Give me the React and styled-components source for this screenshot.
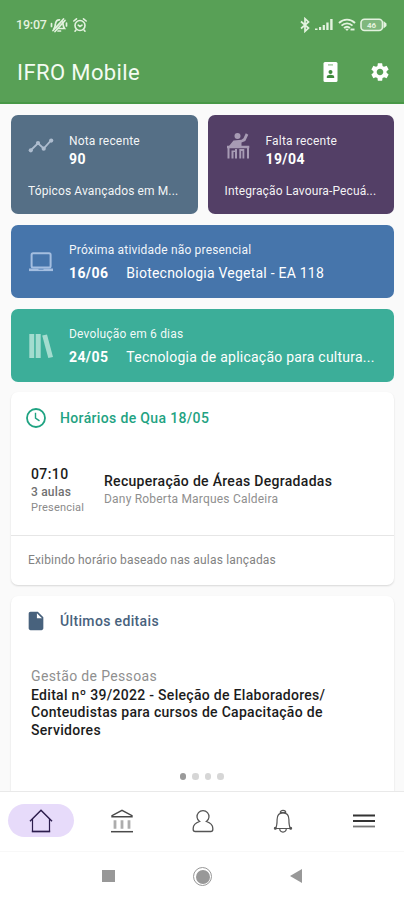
import styled, { createGlobalStyle } from 'styled-components'
import { MdSettings, MdInsertDriveFile } from 'react-icons/md'



const App = () => {

    return (

        <Screen>
            <GlobalStyle />
            <Header>
                <StatusBar>
                    <StatusSide $gap="4px">
                        <Clock>19:07</Clock>
                        <MutedIcon />
                        <AlarmIcon />
                    </StatusSide>
                    <StatusSide $gap="4px">
                        <BluetoothIcon />
                        <SignalIcon />
                        <WifiIcon />
                        <BatteryIcon />
                    </StatusSide>
                </StatusBar>
                <Toolbar>
                    <AppTitle>IFRO Mobile</AppTitle>
                    <ToolbarActions>
                        <BadgeIcon />
                        <MdSettings size={22} />
                    </ToolbarActions>
                </Toolbar>
            </Header>

            <Feed>
                <TileRow>
                    <Tile $color="#556f86">
                        <TileTop>
                            <TileIcon $color="#aebdcf"><TrendIcon /></TileIcon>
                            <TileTexts>
                                <TileCaption>Nota recente</TileCaption>
                                <TileValue>90</TileValue>
                            </TileTexts>
                        </TileTop>
                        <TileSubject>Tópicos Avançados em M...</TileSubject>
                    </Tile>
                    <Tile $color="#533f66">
                        <TileTop>
                            <TileIcon $color="#a79bb4"><StudentIcon /></TileIcon>
                            <TileTexts>
                                <TileCaption>Falta recente</TileCaption>
                                <TileValue>19/04</TileValue>
                            </TileTexts>
                        </TileTop>
                        <TileSubject>Integração Lavoura-Pecuá...</TileSubject>
                    </Tile>
                </TileRow>

                <Banner $color="#4675ab">
                    <TileIcon $color="#a4bee0"><LaptopIcon /></TileIcon>
                    <TileTexts>
                        <TileCaption>Próxima atividade não presencial</TileCaption>
                        <BannerLine>
                            <TileValue>16/06</TileValue>
                            <BannerTitle>Biotecnologia Vegetal - EA 118</BannerTitle>
                        </BannerLine>
                    </TileTexts>
                </Banner>

                <Banner $color="#3cae99">
                    <TileIcon $color="#a3dccf"><BooksIcon /></TileIcon>
                    <TileTexts>
                        <TileCaption>Devolução em 6 dias</TileCaption>
                        <BannerLine>
                            <TileValue>24/05</TileValue>
                            <BannerTitle>Tecnologia de aplicação para cultura...</BannerTitle>
                        </BannerLine>
                    </TileTexts>
                </Banner>

                <Schedule>
                    <CardHeading $color="#1fa382" $height="52px">
                        <ClockIcon />
                        <CardTitle>Horários de Qua 18/05</CardTitle>
                    </CardHeading>
                    <Lesson>
                        <LessonTime>
                            <Hour>07:10</Hour>
                            <LessonCount>3 aulas</LessonCount>
                            <LessonMode>Presencial</LessonMode>
                        </LessonTime>
                        <LessonInfo>
                            <LessonName>Recuperação de Áreas Degradadas</LessonName>
                            <Teacher>Dany Roberta Marques Caldeira</Teacher>
                        </LessonInfo>
                    </Lesson>
                    <CardFooter>Exibindo horário baseado nas aulas lançadas</CardFooter>
                </Schedule>

                <Notices>
                    <CardHeading $color="#48627d" $height="49px">
                        <MdInsertDriveFile size={22} />
                        <CardTitle>Últimos editais</CardTitle>
                    </CardHeading>
                    <Notice>
                        <NoticeArea>Gestão de Pessoas</NoticeArea>
                        <NoticeTitle>
                            Edital nº 39/2022 - Seleção de Elaboradores/<br />
                            Conteudistas para cursos de Capacitação de<br />
                            Servidores
                        </NoticeTitle>
                    </Notice>
                    <Dots>
                        <Dot $active />
                        <Dot />
                        <Dot />
                        <Dot />
                    </Dots>
                </Notices>
            </Feed>

            <TabBar>
                <Tab $active><HomeIcon /></Tab>
                <Tab><InstitutionIcon /></Tab>
                <Tab><PersonIcon /></Tab>
                <Tab><BellIcon /></Tab>
                <Tab><MenuIcon /></Tab>
            </TabBar>

            <SystemBar>
                <RecentsKey />
                <HomeKey />
                <BackKey />
            </SystemBar>
        </Screen>

    )
}

/* status bar icons */

const MutedIcon = () => (
    <svg width="18" height="16" viewBox="0 0 18 16" fill="none" stroke="currentColor" strokeWidth="1.7" strokeLinecap="round">
        <path d="M4 11.5c1.300-1 1-3 1.500-5C6 4 7.600 2.700 9.500 2.800M12.500 5c.8 2 .3 4 2 6.500H7.500M8 14h2.500" />
        <path d="M3 13.500 13.500 2M1.500 6.500v3M16.500 6v3M6 10.500l5-5.500M5 14.500 15 3.500" />
    </svg>
)

const AlarmIcon = () => (
    <svg width="16" height="16" viewBox="0 0 16 16" fill="none" stroke="currentColor" strokeWidth="1.600" strokeLinecap="round">
        <circle cx="8" cy="8.500" r="5" />
        <path d="M1.800 4 4.500 1.800M14.200 4 11.500 1.800M6.200 8.200 8 9.500l2-1.300M4 13l-1 1.200M12 13l1 1.200" />
    </svg>
)

const BluetoothIcon = () => (
    <svg width="10" height="16" viewBox="0 0 10 16" fill="none" stroke="currentColor" strokeWidth="1.700">
        <path d="M1 4.500 8.500 11 5 14.300V1.700L8.500 5 1 11.500" />
    </svg>
)

const SignalIcon = () => (
    <svg width="20" height="13" viewBox="0 0 20 13" fill="currentColor">
        <path d="M1 10.500h2.500V12H1zM5 9h2.200v3H5zM8.700 7h2.200v5H8.700zM12.300 4.500h2.300V12h-2.300zM16.200 1h2.400v11h-2.400z" />
    </svg>
)

const WifiIcon = () => (
    <svg width="18" height="14" viewBox="0 0 18 14" fill="none" stroke="currentColor" strokeWidth="1.900">
        <path d="M1 5c4.500-4.500 11.500-4.500 16 0M3.500 7.600c3.200-3 7.800-3 11 0M6 10c2-1.700 4-1.700 6 0" />
        <path d="M7 10.800 9 13l2-2.200z" fill="currentColor" stroke="none" />
        <path d="M12.500 11.500h4" />
    </svg>
)

const BatteryIcon = () => (
    <svg width="27" height="14" viewBox="0 0 27 14">
        <rect x="1" y="1.200" width="21.500" height="11.300" rx="3.500" fill="#7fb77d" stroke="currentColor" strokeWidth="1.600" />
        <path d="M23.500 3v7.500l3-2.500V5.500z" fill="currentColor" />
        <text x="7" y="9.800" fontSize="8" fontWeight="700" fill="currentColor" fontFamily="Roboto, sans-serif">46</text>
    </svg>
)

const BadgeIcon = () => (
    <svg width="15" height="20" viewBox="0 0 15 20">
        <rect x="0.500" y="0" width="14" height="20" rx="1.500" fill="currentColor" />
        <path d="M5 2.300h5v1.200H5z" fill="#8dbf8b" />
        <circle cx="7.500" cy="10" r="2" fill="#3f8a3d" />
        <path d="M3.800 16v-1.300c0-1.200 2-1.900 3.700-1.900s3.700.7 3.700 1.900V16z" fill="#3f8a3d" />
    </svg>
)

/* tile icons */

const TrendIcon = () => (
    <svg width="26" height="16" viewBox="0 0 26 16" fill="currentColor">
        <path d="M2.500 12.500 10 5.300l5.700 5.200 7.800-8.700" fill="none" stroke="currentColor" strokeWidth="1.800" />
        <circle cx="2.800" cy="12.300" r="2.100" />
        <circle cx="10" cy="5" r="2.100" />
        <circle cx="15.700" cy="10.700" r="2.100" />
        <circle cx="23.200" cy="2.600" r="2.100" />
    </svg>
)

const StudentIcon = () => (
    <svg width="24" height="28" viewBox="0 0 24 28" fill="currentColor">
        <circle cx="11.500" cy="4" r="3" />
        <path d="M19.800 1.200 22.300 2.700 19.300 9 15.500 10.500V14H3l4.500-5.500 8-.8 2-1.500z" />
        <path d="M1 13.800h22.300v2.500H1zM1.500 16h2v10.500h-2zM21 16h2v10.500h-2zM5.500 18.500h4.500v1.500H7.500v6.500h-2zM9 17h2v9.500H9zM13.300 17h5v9.500h-1.800v-7.500h-1.300v7.500h-1.900z" />
    </svg>
)

const LaptopIcon = () => (
    <svg width="26" height="20" viewBox="0 0 26 20" fill="none" stroke="currentColor">
        <rect x="3.600" y="1.200" width="19" height="14.300" rx="1.500" strokeWidth="2" />
        <path d="M1 17.800h24" strokeWidth="2.600" />
        <path d="M10.500 17.300h5" stroke="#6f96c6" strokeWidth="1.200" />
    </svg>
)

const BooksIcon = () => (
    <svg width="26" height="26" viewBox="0 0 26 26" fill="currentColor">
        <path d="M1.300 1h4.900v24H1.300zM7.700 1h5v24h-5z" />
        <path d="m14.200 2.500 4.800-1L25 24l-4.700 1z" />
    </svg>
)

const ClockIcon = () => (
    <svg width="22" height="22" viewBox="0 0 22 22" fill="none" stroke="currentColor" strokeWidth="1.800">
        <circle cx="11" cy="11" r="9" />
        <path d="M10.500 5.800v5.400l4 2.700" strokeWidth="1.400" />
    </svg>
)

/* bottom bar icons */

const HomeIcon = () => (
    <svg width="26" height="26" viewBox="0 0 26 26" fill="none" stroke="#2c1d4d">
        <path d="M2 13.200 13 2.300l11 10.900" strokeWidth="1.500" />
        <path d="M4.500 11v12.500M21.500 11v12.500" strokeWidth="1.200" />
        <path d="M3.800 23.500h18.400" strokeWidth="1.700" />
    </svg>
)

const InstitutionIcon = () => (
    <svg width="26" height="26" viewBox="0 0 26 26" fill="none" stroke="#4a4a4a">
        <path d="M3 8.700v-1L13 2.300l10 5.400v1z" strokeWidth="1.400" />
        <path d="M6 12.300v8.500M13 12.300v8.500M20 12.300v8.500" stroke="#adadad" strokeWidth="2.800" />
        <path d="M2 23.700h22" strokeWidth="1.500" />
    </svg>
)

const PersonIcon = () => (
    <svg width="24" height="26" viewBox="0 0 24 26" fill="none" stroke="#555" strokeWidth="1.300">
        <path d="M8.600 13.500a6 6 0 1 1 6.800 0c3.600 1.200 6.400 3 6.400 6.700v1.300c0 1.400-.8 2-2 2H4.200c-1.200 0-2-.6-2-2v-1.300c0-3.700 2.800-5.500 6.400-6.700z" />
    </svg>
)

const BellIcon = () => (
    <svg width="20" height="26" viewBox="0 0 20 26" fill="none" stroke="#555" strokeWidth="1.200">
        <path d="M7.200 4.800C7.200 1.500 12.800 1.500 12.800 4.800M7 4.600h6" />
        <path d="M2.500 20.500c1.600-2.500 1.600-5.500 1.600-9C4.100 7.300 6.300 4.800 10 4.800s5.900 2.500 5.900 6.700c0 3.500 0 6.500 1.600 9z" />
        <path d="M6.700 20.800c.3 4.300 6.300 4.300 6.600 0" />
        <circle cx="2.300" cy="20.300" r=".9" fill="#444" />
        <circle cx="17.700" cy="20.300" r=".9" fill="#444" />
    </svg>
)

const MenuIcon = () => (
    <svg width="24" height="16" viewBox="0 0 24 16" stroke="#333" strokeWidth="1.800">
        <path d="M1 2.500h22M1 8h22" />
        <path d="M1 13.500h22" stroke="#777" />
    </svg>
)

const GlobalStyle = createGlobalStyle `
    body {
        margin: 0;
        background: #fafafa;
        font-family: Roboto, "Noto Sans", sans-serif;
    }

    *, *::before, *::after {
        box-sizing: border-box;
    }

    svg {
        display: block;
        flex-shrink: 0;
    }
`

const Screen = styled.div `
    display: flex;
    flex-direction: column;
    width: 404px;
    height: 900px;
    overflow: hidden;
    background-color: #fafafa;
`

const Header = styled.header `
    flex: 0 0 104px;
    color: white;
    background-color: #58a056;
    border-bottom: 2px solid #489847;
`

const StatusBar = styled.div `
    display: flex;
    align-items: center;
    justify-content: space-between;
    height: 49px;
    padding: 0 17px 0 16px;
    color: #e3f2df;
`

const StatusSide = styled.div `
    display: flex;
    align-items: center;
    gap: ${props => props.$gap};
`

const Clock = styled.span `
    margin-right: -1px;
    font-size: 12.5px;
    line-height: 16px;
    font-weight: 500;
    letter-spacing: -0.2px;
`

const Toolbar = styled.div `
    display: flex;
    align-items: center;
    justify-content: space-between;
    height: 46px;
    padding: 0 13px 0 17px;
`

const AppTitle = styled.h1 `
    margin: 0;
    padding-top: 2px;
    font-size: 22px;
    line-height: 28px;
    font-weight: 400;
    letter-spacing: 0.4px;
    color: #f4fbf2;
`

const ToolbarActions = styled.div `
    display: flex;
    align-items: center;
    gap: 31px;
`

const Feed = styled.main `
    display: flex;
    flex-direction: column;
    flex: 0 0 687px;
    gap: 11px;
    padding: 11px 10px 0 11px;
    overflow: hidden;
`

const TileRow = styled.div `
    display: grid;
    grid-template-columns: 1fr 1fr;
    flex-shrink: 0;
    gap: 10px;
`

const Tile = styled.section `
    height: 99px;
    padding: 17px 10px 0 17px;
    border-radius: 7px;
    color: white;
    background-color: ${props => props.$color};
`

const TileTop = styled.div `
    display: flex;
    height: 50px;
`

const TileIcon = styled.div `
    display: flex;
    align-items: center;
    justify-content: center;
    flex: 0 0 26px;
    height: 28px;
    margin-right: 15px;
    color: ${props => props.$color};
`

const TileTexts = styled.div `
    display: flex;
    flex-direction: column;
`

const TileCaption = styled.span `
    font-size: 12px;
    line-height: 18px;
    letter-spacing: 0.18px;
    color: rgba(255, 255, 255, 0.95);
    white-space: nowrap;
`

const TileValue = styled.strong `
    font-size: 14px;
    line-height: 18px;
    font-weight: 700;
    letter-spacing: 0.4px;
`

const TileSubject = styled(TileCaption) `
    display: block;
    letter-spacing: 0.12px;
`

const Banner = styled.section `
    display: flex;
    align-items: center;
    flex: 0 0 73px;
    padding-left: 17px;
    border-radius: 7px;
    color: white;
    background-color: ${props => props.$color};
`

const BannerLine = styled.div `
    display: flex;
    gap: 18px;
    margin-top: 5px;
`

const BannerTitle = styled.span `
    font-size: 14px;
    line-height: 18px;
    letter-spacing: 0.23px;
    white-space: nowrap;
`

const Card = styled.section `
    border-radius: 7px;
    background-color: white;
    box-shadow: 0 1px 2px rgba(0, 0, 0, 0.14);
`

const Schedule = styled(Card) `
    flex: 0 0 193px;
    margin-top: -1px;
`

const Notices = styled(Card) `
    flex: 0 0 205px;
`

const CardHeading = styled.div `
    display: flex;
    align-items: center;
    gap: 13px;
    height: ${props => props.$height};
    padding-left: 14px;
    color: ${props => props.$color};
`

const CardTitle = styled.h2 `
    margin: 0;
    font-size: 14px;
    line-height: 18px;
    font-weight: 500;
    letter-spacing: 0.35px;
`

const Lesson = styled.div `
    display: flex;
    align-items: center;
    height: 91px;
    padding: 1px 0 0 20px;
`

const LessonTime = styled.div `
    display: flex;
    flex-direction: column;
    flex: 0 0 73px;
`

const Hour = styled.span `
    font-size: 14px;
    line-height: 19px;
    font-weight: 500;
    letter-spacing: 0.4px;
    color: #1c1c1c;
`

const LessonCount = styled.span `
    font-size: 12px;
    line-height: 16px;
    font-weight: 500;
    letter-spacing: 0.2px;
    color: #707070;
`

const LessonMode = styled.span `
    font-size: 11px;
    line-height: 15px;
    letter-spacing: 0.2px;
    color: #8a8a8a;
`

const LessonInfo = styled.div `
    display: flex;
    flex-direction: column;
    padding-bottom: 1px;
`

const LessonName = styled.span `
    font-size: 14px;
    line-height: 19px;
    font-weight: 500;
    letter-spacing: 0.3px;
    color: #1c1c1c;
`

const Teacher = styled.span `
    font-size: 12px;
    line-height: 17px;
    letter-spacing: 0.2px;
    color: #8f8f8f;
`

const CardFooter = styled.div `
    height: 50px;
    padding-left: 17px;
    border-top: 1px solid #e6e6e6;
    font-size: 12px;
    line-height: 49px;
    letter-spacing: 0.17px;
    color: #828282;
`

const Notice = styled.article `
    height: 125px;
    padding: 22px 0 0 20px;
`

const NoticeArea = styled.div `
    font-size: 14px;
    line-height: 19px;
    letter-spacing: 0.35px;
    color: #8f8f8f;
`

const NoticeTitle = styled.p `
    margin: 1px 0 0;
    font-size: 14px;
    line-height: 17.4px;
    font-weight: 500;
    letter-spacing: 0.3px;
    color: #1c1c1c;
    white-space: nowrap;
`

const Dots = styled.div `
    display: flex;
    justify-content: center;
    gap: 6px;
    padding-top: 3px;
    padding-right: 2px;
`

const Dot = styled.span `
    width: 6.5px;
    height: 6.5px;
    border-radius: 50%;
    background-color: ${props => props.$active ? '#9a9a9a' : '#d6d6d6'};
`

const TabBar = styled.nav `
    display: flex;
    align-items: center;
    justify-content: space-between;
    flex: 0 0 61px;
    padding: 0 7px 2px 8px;
    border-top: 1px solid #e9e9e9;
    border-bottom: 1px solid #f8f8f8;
    background-color: white;
`

const Tab = styled.a `
    display: flex;
    align-items: center;
    justify-content: center;
    width: 66px;
    height: 33px;
    border-radius: 17px;
    background-color: ${props => props.$active ? '#e7dbfa' : 'transparent'};
`

const SystemBar = styled.footer `
    display: flex;
    align-items: center;
    justify-content: center;
    flex: 1;
    gap: 78px;
    background-color: white;
`

const RecentsKey = styled.span `
    width: 12.5px;
    height: 12.5px;
    background-color: #989898;
`

const HomeKey = styled.span `
    width: 19px;
    height: 19px;
    padding: 1.5px;
    border: 1.5px solid #989898;
    border-radius: 50%;
    background: #989898 content-box;
`

const BackKey = styled.span `
    border: solid transparent;
    border-width: 7px 12px 7px 0;
    border-right-color: #989898;
`

export default App
